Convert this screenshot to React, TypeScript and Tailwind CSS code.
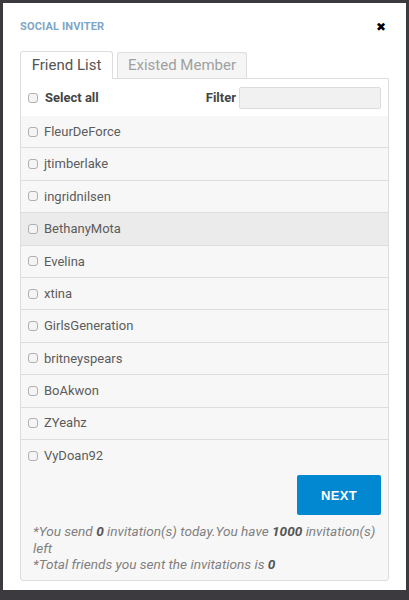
import React from 'react';

const friends = [
  'FleurDeForce',
  'jtimberlake',
  'ingridnilsen',
  'BethanyMota',
  'Evelina',
  'xtina',
  'GirlsGeneration',
  'britneyspears',
  'BoAkwon',
  'ZYeahz',
  'VyDoan92',
];

const Box = () => (
  <span className="inline-block w-[10px] h-[10px] rounded-[3px] border border-[#b0b0b0] bg-[#f4f4f4] shrink-0" />
);

const App: React.FC = () => {
  return (
    <div className="w-[409px] h-[600px] bg-[#3d3a3f] pt-[3px] pl-[3px] overflow-hidden" style={{ fontFamily: 'Roboto, "Liberation Sans", sans-serif' }}>
      <div className="w-[403px] h-[587px] bg-white flex flex-col px-[17px]">
        <div className="flex items-center justify-between h-[46px] pt-[2px]">
          <span className="text-[11px] font-bold text-[#7ea6c8] tracking-[0.15px]">SOCIAL INVITER</span>
          <span className="text-[12px] font-bold text-black leading-none mr-[3px]" style={{ fontFamily: '"DejaVu Sans", sans-serif' }}>✖</span>
        </div>

        <div className="flex items-end gap-[4px] h-[28px] mt-[1px]">
          <div className="h-[28px] w-[93px] border border-[#dddddd] border-b-0 bg-white rounded-t-[3px] flex items-center justify-center text-[15px] text-[#555] relative top-[1px] z-10">
            Friend List
          </div>
          <div className="h-[26px] w-[130px] border border-[#dddddd] border-b-0 bg-[#f5f5f5] rounded-t-[3px] flex items-center justify-center text-[15px] text-[#a0a0a0]">
            Existed Member
          </div>
        </div>

        <div className="w-[369px] h-[503px] border border-[#dddddd] rounded-b-[3px] bg-[#f7f7f7] flex flex-col">
          <div className="h-[37px] bg-white flex items-center pl-[7px] pr-[7px]">
            <Box />
            <span className="ml-[7px] text-[13px] font-bold text-[#444]">Select all</span>
            <span className="ml-auto text-[13px] font-bold text-[#444] mr-[3px]">Filter</span>
            <div className="w-[142px] h-[22px] bg-[#f1f1f1] border border-[#dcdcdc] rounded-[2px]" />
          </div>

          {friends.map((f, i) => (
            <div
              key={f}
              className={
                'h-[32.4px] flex items-center pl-[7px] ' +
                (i < friends.length - 1 ? 'border-b border-[#dddddd] ' : '') +
                (f === 'BethanyMota' ? 'bg-[#ebebeb]' : 'bg-[#f7f7f7]')
              }
            >
              <Box />
              <span className="ml-[6px] text-[13px] text-[#5c5c5c]">{f}</span>
            </div>
          ))}

          <div className="flex justify-end pr-[7px] mt-[3px]">
            <button className="w-[84px] h-[40px] bg-[#0288d1] rounded-[2px] text-white text-[13px] font-bold tracking-[0.3px]" style={{ fontFamily: '"Liberation Sans", Arial, sans-serif' }}>
              NEXT
            </button>
          </div>

          <div className="pl-[12px] pr-[4px] mt-[8px] text-[13.6px] italic text-[#808080] leading-[16.5px]">
            <p>
              *You send <b className="text-[#555]">0</b> invitation(s) today.You have <b className="text-[#555]">1000</b> invitation(s) left
            </p>
            <p>
              *Total friends you sent the invitations is <b className="text-[#555]">0</b>
            </p>
          </div>
        </div>
      </div>
    </div>
  );
};

export default App;
